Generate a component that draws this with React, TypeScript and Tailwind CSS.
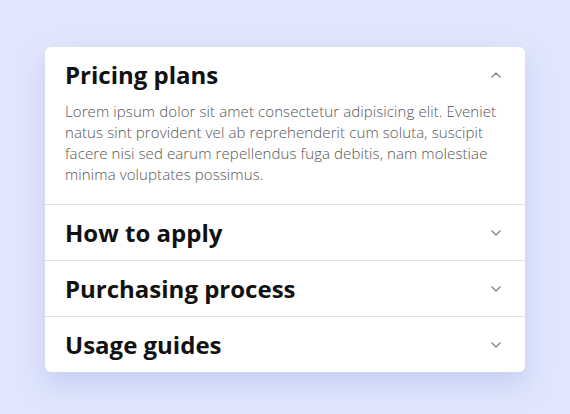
import React, { useState } from 'react';

const items = [
  {
    title: 'Pricing plans',
    body: 'Lorem ipsum dolor sit amet consectetur adipisicing elit. Eveniet natus sint provident vel ab reprehenderit cum soluta, suscipit facere nisi sed earum repellendus fuga debitis, nam molestiae minima voluptates possimus.',
  },
  { title: 'How to apply', body: 'Lorem ipsum dolor sit amet consectetur adipisicing elit.' },
  { title: 'Purchasing process', body: 'Lorem ipsum dolor sit amet consectetur adipisicing elit.' },
  { title: 'Usage guides', body: 'Lorem ipsum dolor sit amet consectetur adipisicing elit.' },
];

const Chevron = ({ up }: { up: boolean }) => (
  <svg width="10" height="6" viewBox="0 0 10 6" fill="none" className="shrink-0">
    <path
      d={up ? 'M1 5L5 1L9 5' : 'M1 1L5 5L9 1'}
      stroke="#8a8a8a"
      strokeWidth="1.5"
      strokeLinecap="round"
      strokeLinejoin="round"
    />
  </svg>
);

const App = () => {
  const [open, setOpen] = useState<number>(0);

  return (
    <div className="flex min-h-screen items-start justify-center bg-[#e0e7fc] pt-[47px] font-['Open_Sans',sans-serif]">
      <div className="w-[480px] overflow-hidden rounded-md bg-white shadow-[0_12px_28px_rgba(99,110,220,0.22)]">
        {items.map((item, i) => (
          <div key={item.title} className={i > 0 ? 'border-t border-[#e2e2e2]' : ''}>
            <button
              type="button"
              onClick={() => setOpen(open === i ? -1 : i)}
              className="flex h-[55px] w-full items-center justify-between pl-5 pr-6 text-left"
            >
              <span className="text-[24px] leading-8 font-bold text-[#111]">{item.title}</span>
              <Chevron up={open === i} />
            </button>
            {open === i && (
              <p className="-mt-px px-5 pb-[19px] text-[15px] leading-[21px] font-light tracking-[0.1px] text-[#555]">
                {item.body}
              </p>
            )}
          </div>
        ))}
      </div>
    </div>
  );
};

export default App;
